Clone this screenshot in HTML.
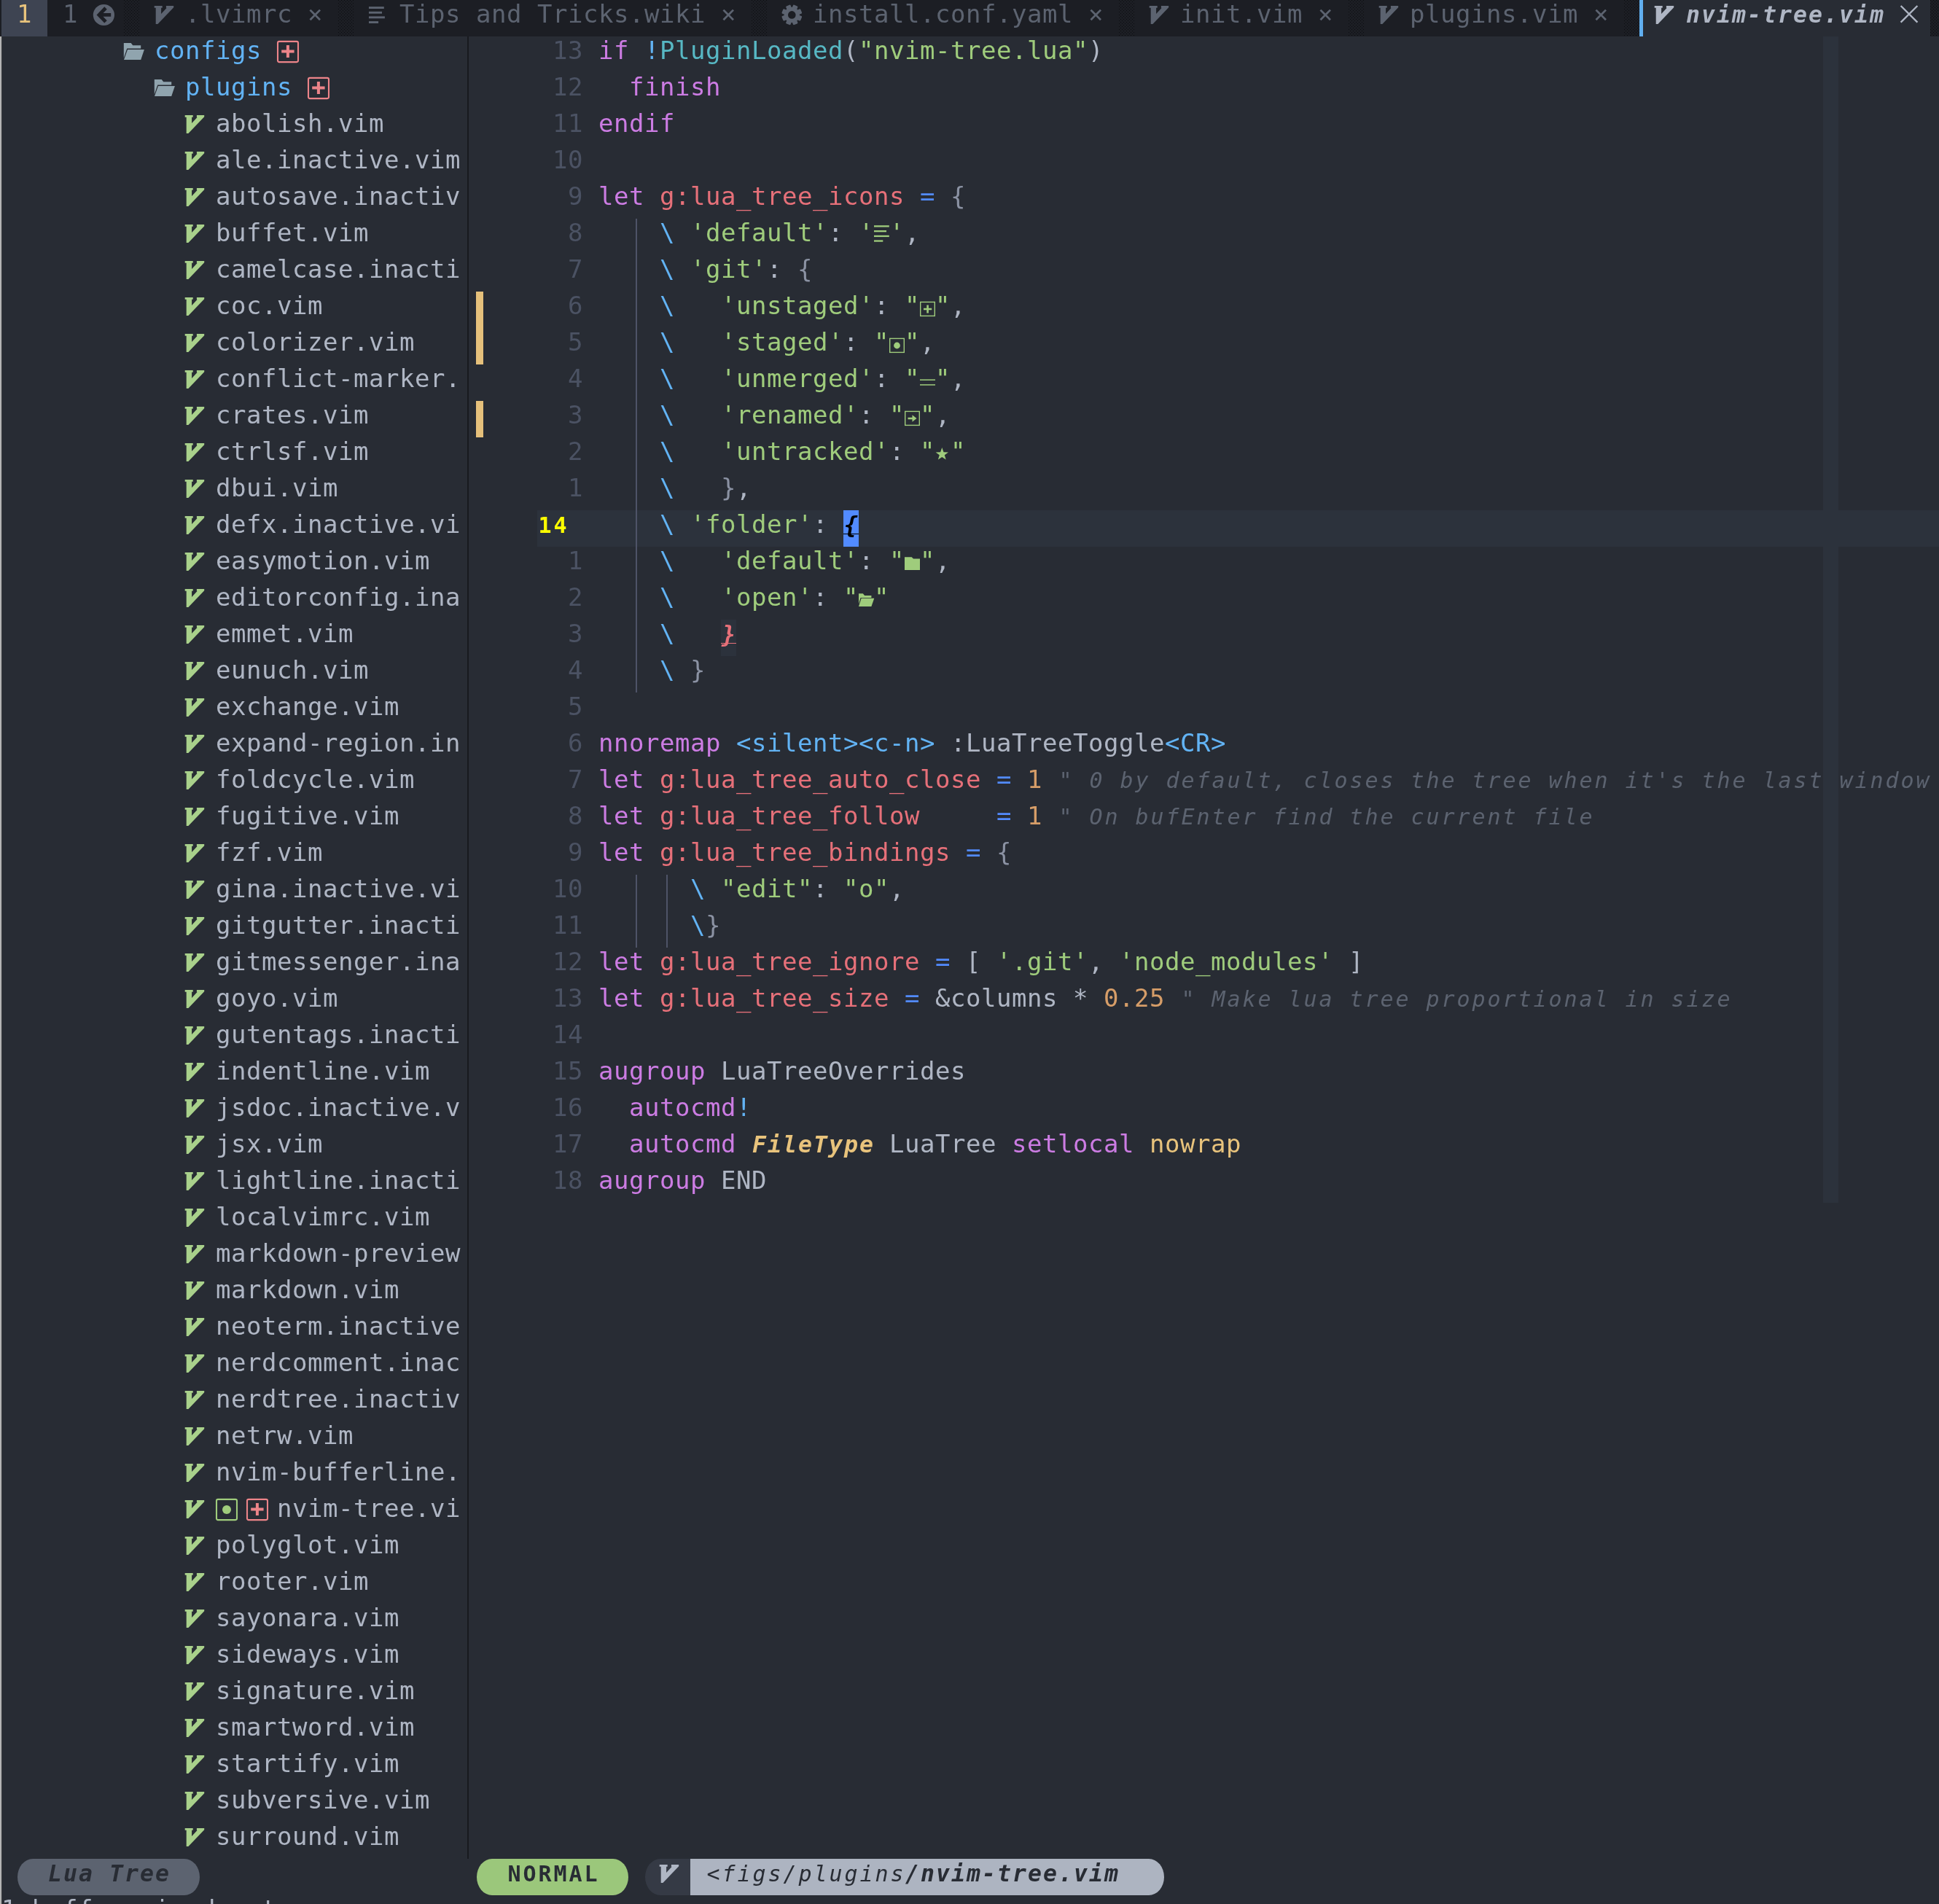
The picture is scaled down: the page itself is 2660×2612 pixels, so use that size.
<!DOCTYPE html><html lang="en"><head><meta charset="utf-8"><title>nvim-tree.vim - NVIM</title><style>

html,body{margin:0;padding:0}
body{background:#282c34;width:2660px;height:2612px;overflow:hidden;position:relative;
 font-family:"DejaVu Sans Mono","Liberation Mono",monospace;font-size:34.0px;color:#abb2bf}
.r{position:absolute;left:0;width:2660px;height:50px;overflow:visible;will-change:transform}
.r span{position:absolute;top:-5.6px;height:50px;line-height:50px;white-space:pre;letter-spacing:0.5303px;font-kerning:none;font-variant-ligatures:none}
.r svg{position:absolute;top:0;overflow:visible}
.bg{position:absolute;top:0;height:50px;display:block}
.abs{position:absolute;display:block}
.r span.b,.r span.cln{font-weight:bold;font-size:30.0px;letter-spacing:2.9385px;margin-left:1.47px;top:-4.22px}
.r span.it{font-style:italic;font-size:30.0px;letter-spacing:2.9385px;margin-left:1.47px;top:-4.22px}
.r span.bi{font-weight:bold;font-style:italic;font-size:31.5px;letter-spacing:2.0354px;margin-left:1.02px;top:-4.73px}
.cln{color:#ffff00}
.curt{color:#000}
.fg{color:#afb6c4}.br{color:#8b92a3}.pu{color:#cc7ce3}.bl{color:#62b3f4}.ob{color:#528bff}.cy{color:#57b8c4}.gr{color:#9fcc7c}.rd{color:#e67079}.or{color:#d69d68}.ye{color:#e8c37c}.cm{color:#5c6370}.ln{color:#4b5263}.tb{color:#5c6370}.dk{color:#282c34}.gi{color:#ec8489}
</style></head><body>
<svg width="0" height="0" style="position:absolute"><defs><pattern id="shp" width="4" height="4" patternUnits="userSpaceOnUse"><rect width="1" height="1" fill="#0c0d10"/><rect x="2" y="2" width="1" height="1" fill="#0c0d10"/></pattern></defs></svg>
<i class="abs" style="left:2501px;top:50px;width:21px;height:1600px;background:#2c323c"></i>
<i class="abs" style="left:737px;top:700px;width:1923px;height:50px;background:#2c323c"></i>
<i class="abs" style="left:653px;top:400px;width:10px;height:100px;background:#e5c07b"></i>
<i class="abs" style="left:653px;top:550px;width:10px;height:50px;background:#e5c07b"></i>
<i class="abs" style="left:872.0px;top:300px;width:2px;height:650px;background:#4e5367"></i>
<i class="abs" style="left:872.0px;top:1200px;width:2px;height:100px;background:#4e5367"></i>
<i class="abs" style="left:914.0px;top:1200px;width:2px;height:100px;background:#4e5367"></i>
<i class="abs" style="left:641px;top:50px;width:2px;height:2500px;background:#181a1f"></i>
<i class="abs" style="left:0;top:0;width:1.5px;height:2612px;background:#b4b4b4"></i>
<i class="abs" style="left:1.5px;top:0;width:0.7px;height:2612px;background:#3a3c40"></i>
<div class="r" style="top:0px"><i class="bg" style="left:0;width:2660px;background:#1c1e24"></i><i class="bg" style="left:2px;width:63px;background:#3e4452"></i><span class="ye" style="left:23px">1</span><span class="tb" style="left:86px">1</span><svg style="left:126px" width="32" height="50" viewBox="-2 0 32 50"><circle cx="14.4" cy="20.5" r="14.6" fill="#5c6370"/><path fill="none" stroke="#1c1e24" stroke-width="4.8" stroke-linecap="butt" d="M17,11L7.9,20.4L17,29.8M8.5,20.4H24.2"/></svg><svg style="left:170px" width="21" height="50"><rect width="21" height="50" fill="url(#shp)"/></svg><svg style="left:210px" width="32" height="50" viewBox="-2 0 32 50"><path fill="#5c6370" d="M-0.3,8.1H10.7V10.8H9.1V18.9L16.5,11L15.9,10.8V8.1H26.2V10.2L4.4,33.1H1.7V10.8H-0.3Z"/></svg><span class="tb" style="left:254px">.lvimrc</span><span class="tb" style="left:422px">×</span><svg style="left:464px" width="21" height="50"><rect width="21" height="50" fill="url(#shp)"/></svg><svg style="left:504px" width="32" height="50" viewBox="-2 0 32 50"><rect x="0" y="9.1" width="20.8" height="2.9" fill="#5c6370"/><rect x="0" y="15.8" width="18.0" height="2.9" fill="#5c6370"/><rect x="0" y="22.4" width="21.9" height="2.9" fill="#5c6370"/><rect x="0" y="29.1" width="13.1" height="2.9" fill="#5c6370"/></svg><span class="tb" style="left:548px">Tips and Tricks.wiki</span><span class="tb" style="left:989px">×</span><svg style="left:1031px" width="21" height="50"><rect width="21" height="50" fill="url(#shp)"/></svg><svg style="left:1071px" width="32" height="50" viewBox="-2 0 32 50"><rect x="9.9" y="6.5" width="6.8" height="8" rx="1.2" fill="#5c6370" transform="rotate(22.5 13.3 20.4)"/><rect x="9.9" y="6.5" width="6.8" height="8" rx="1.2" fill="#5c6370" transform="rotate(67.5 13.3 20.4)"/><rect x="9.9" y="6.5" width="6.8" height="8" rx="1.2" fill="#5c6370" transform="rotate(112.5 13.3 20.4)"/><rect x="9.9" y="6.5" width="6.8" height="8" rx="1.2" fill="#5c6370" transform="rotate(157.5 13.3 20.4)"/><rect x="9.9" y="6.5" width="6.8" height="8" rx="1.2" fill="#5c6370" transform="rotate(202.5 13.3 20.4)"/><rect x="9.9" y="6.5" width="6.8" height="8" rx="1.2" fill="#5c6370" transform="rotate(247.5 13.3 20.4)"/><rect x="9.9" y="6.5" width="6.8" height="8" rx="1.2" fill="#5c6370" transform="rotate(292.5 13.3 20.4)"/><rect x="9.9" y="6.5" width="6.8" height="8" rx="1.2" fill="#5c6370" transform="rotate(337.5 13.3 20.4)"/><circle cx="13.3" cy="20.4" r="10.6" fill="#5c6370"/><circle cx="13.3" cy="20.4" r="5.3" fill="#1c1e24"/></svg><span class="tb" style="left:1115px">install.conf.yaml</span><span class="tb" style="left:1493px">×</span><svg style="left:1535px" width="21" height="50"><rect width="21" height="50" fill="url(#shp)"/></svg><svg style="left:1575px" width="32" height="50" viewBox="-2 0 32 50"><path fill="#5c6370" d="M-0.3,8.1H10.7V10.8H9.1V18.9L16.5,11L15.9,10.8V8.1H26.2V10.2L4.4,33.1H1.7V10.8H-0.3Z"/></svg><span class="tb" style="left:1619px">init.vim</span><span class="tb" style="left:1808px">×</span><svg style="left:1850px" width="21" height="50"><rect width="21" height="50" fill="url(#shp)"/></svg><svg style="left:1890px" width="32" height="50" viewBox="-2 0 32 50"><path fill="#5c6370" d="M-0.3,8.1H10.7V10.8H9.1V18.9L16.5,11L15.9,10.8V8.1H26.2V10.2L4.4,33.1H1.7V10.8H-0.3Z"/></svg><span class="tb" style="left:1934px">plugins.vim</span><span class="tb" style="left:2186px">×</span><svg style="left:2228px" width="21" height="50"><rect width="21" height="50" fill="url(#shp)"/></svg><i class="bg" style="left:2249px;width:399px;background:#282c34"></i><i class="bg" style="left:2249px;width:5px;background:#61afef"></i><svg style="left:2268px" width="32" height="50" viewBox="-2 0 32 50"><path fill="#afb6c4" d="M-0.3,8.1H10.7V10.8H9.1V18.9L16.5,11L15.9,10.8V8.1H26.2V10.2L4.4,33.1H1.7V10.8H-0.3Z"/></svg><span class="fg bi" style="left:2312px">nvim-tree.vim</span><svg style="left:2604px" width="32" height="50" viewBox="-2 0 32 50"><path stroke="#afb6c4" stroke-width="2.4" fill="none" d="M1.6,8L24.4,30.6M24.4,8L1.6,30.6"/></svg><svg style="left:2648px" width="12" height="50"><rect width="12" height="50" fill="url(#shp)"/></svg></div>
<div class="r" style="top:50px"><svg style="left:168px" width="32" height="50" viewBox="-2 0 32 50"><path fill="#90a4ae" d="M-0.2,9H9.7L12.2,12.3H23.2V16.6H4.2L-0.2,29.5Z"/><path fill="#90a4ae" d="M5,18H27.9L23.2,32.1H0Z"/></svg><span class="bl" style="left:212px">configs</span><svg style="left:378px" width="32" height="50" viewBox="-2 0 32 50"><rect x="1" y="6.9" width="28" height="28.2" rx="2" fill="none" stroke="#ec8489" stroke-width="2.1"/><path fill="#ec8489" d="M12.9,12.1H16.9V18.6H23.6V22.6H16.9V29.1H12.9V22.6H6.2V18.6H12.9Z"/></svg><span class="ln" style="left:758px">13</span><span class="pu" style="left:821px">if</span><span class="bl" style="left:884px">!</span><span class="cy" style="left:905px">PluginLoaded</span><span class="fg" style="left:1157px">(</span><span class="gr" style="left:1178px">"nvim-tree.lua"</span><span class="fg" style="left:1493px">)</span></div>
<div class="r" style="top:100px"><svg style="left:210px" width="32" height="50" viewBox="-2 0 32 50"><path fill="#90a4ae" d="M-0.2,9H9.7L12.2,12.3H23.2V16.6H4.2L-0.2,29.5Z"/><path fill="#90a4ae" d="M5,18H27.9L23.2,32.1H0Z"/></svg><span class="bl" style="left:254px">plugins</span><svg style="left:420px" width="32" height="50" viewBox="-2 0 32 50"><rect x="1" y="6.9" width="28" height="28.2" rx="2" fill="none" stroke="#ec8489" stroke-width="2.1"/><path fill="#ec8489" d="M12.9,12.1H16.9V18.6H23.6V22.6H16.9V29.1H12.9V22.6H6.2V18.6H12.9Z"/></svg><span class="ln" style="left:758px">12</span><span class="pu" style="left:863px">finish</span></div>
<div class="r" style="top:150px"><svg style="left:252px" width="32" height="50" viewBox="-2 0 32 50"><path fill="#a9d18b" d="M-0.3,8.1H10.7V10.8H9.1V18.9L16.5,11L15.9,10.8V8.1H26.2V10.2L4.4,33.1H1.7V10.8H-0.3Z"/></svg><span class="fg" style="left:296px">abolish.vim</span><span class="ln" style="left:758px">11</span><span class="pu" style="left:821px">endif</span></div>
<div class="r" style="top:200px"><svg style="left:252px" width="32" height="50" viewBox="-2 0 32 50"><path fill="#a9d18b" d="M-0.3,8.1H10.7V10.8H9.1V18.9L16.5,11L15.9,10.8V8.1H26.2V10.2L4.4,33.1H1.7V10.8H-0.3Z"/></svg><span class="fg" style="left:296px">ale.inactive.vim</span><span class="ln" style="left:758px">10</span></div>
<div class="r" style="top:250px"><svg style="left:252px" width="32" height="50" viewBox="-2 0 32 50"><path fill="#a9d18b" d="M-0.3,8.1H10.7V10.8H9.1V18.9L16.5,11L15.9,10.8V8.1H26.2V10.2L4.4,33.1H1.7V10.8H-0.3Z"/></svg><span class="fg" style="left:296px">autosave.inactiv</span><span class="ln" style="left:779px">9</span><span class="pu" style="left:821px">let</span><span class="rd" style="left:905px">g:lua_tree_icons</span><span class="ob" style="left:1262px">=</span><span class="br" style="left:1304px">{</span></div>
<div class="r" style="top:300px"><svg style="left:252px" width="32" height="50" viewBox="-2 0 32 50"><path fill="#a9d18b" d="M-0.3,8.1H10.7V10.8H9.1V18.9L16.5,11L15.9,10.8V8.1H26.2V10.2L4.4,33.1H1.7V10.8H-0.3Z"/></svg><span class="fg" style="left:296px">buffet.vim</span><span class="ln" style="left:779px">8</span><span class="bl" style="left:905px">\</span><span class="gr" style="left:947px">'default'</span><span class="fg" style="left:1136px">:</span><span class="gr" style="left:1178px">'</span><svg style="left:1197px" width="32" height="50" viewBox="-2 0 32 50"><rect x="0" y="9.2" width="20.8" height="2.3" fill="#9fcc7c"/><rect x="0" y="16.0" width="17.0" height="2.3" fill="#9fcc7c"/><rect x="0" y="22.8" width="20.8" height="2.3" fill="#9fcc7c"/><rect x="0" y="29.4" width="12.3" height="2.3" fill="#9fcc7c"/></svg><span class="gr" style="left:1220px">'</span><span class="fg" style="left:1241px">,</span></div>
<div class="r" style="top:350px"><svg style="left:252px" width="32" height="50" viewBox="-2 0 32 50"><path fill="#a9d18b" d="M-0.3,8.1H10.7V10.8H9.1V18.9L16.5,11L15.9,10.8V8.1H26.2V10.2L4.4,33.1H1.7V10.8H-0.3Z"/></svg><span class="fg" style="left:296px">camelcase.inacti</span><span class="ln" style="left:779px">7</span><span class="bl" style="left:905px">\</span><span class="gr" style="left:947px">'git'</span><span class="fg" style="left:1052px">:</span><span class="br" style="left:1094px">{</span></div>
<div class="r" style="top:400px"><svg style="left:252px" width="32" height="50" viewBox="-2 0 32 50"><path fill="#a9d18b" d="M-0.3,8.1H10.7V10.8H9.1V18.9L16.5,11L15.9,10.8V8.1H26.2V10.2L4.4,33.1H1.7V10.8H-0.3Z"/></svg><span class="fg" style="left:296px">coc.vim</span><span class="ln" style="left:779px">6</span><span class="bl" style="left:905px">\</span><span class="gr" style="left:989px">'unstaged'</span><span class="fg" style="left:1199px">:</span><span class="gr" style="left:1241px">"</span><svg style="left:1260px" width="32" height="50" viewBox="-2 0 32 50"><rect x="0.7" y="14.4" width="19.6" height="19" fill="none" stroke="#9fcc7c" stroke-width="1.4"/><path fill="#9fcc7c" d="M9.3,18.4H11.9V22.7H16.2V25.3H11.9V29.6H9.3V25.3H5V22.7H9.3Z"/></svg><span class="gr" style="left:1283px">"</span><span class="fg" style="left:1304px">,</span></div>
<div class="r" style="top:450px"><svg style="left:252px" width="32" height="50" viewBox="-2 0 32 50"><path fill="#a9d18b" d="M-0.3,8.1H10.7V10.8H9.1V18.9L16.5,11L15.9,10.8V8.1H26.2V10.2L4.4,33.1H1.7V10.8H-0.3Z"/></svg><span class="fg" style="left:296px">colorizer.vim</span><span class="ln" style="left:779px">5</span><span class="bl" style="left:905px">\</span><span class="gr" style="left:989px">'staged'</span><span class="fg" style="left:1157px">:</span><span class="gr" style="left:1199px">"</span><svg style="left:1218px" width="32" height="50" viewBox="-2 0 32 50"><rect x="0.7" y="14.4" width="19.6" height="19" fill="none" stroke="#9fcc7c" stroke-width="1.4"/><circle cx="10.5" cy="24" r="4.4" fill="#9fcc7c"/></svg><span class="gr" style="left:1241px">"</span><span class="fg" style="left:1262px">,</span></div>
<div class="r" style="top:500px"><svg style="left:252px" width="32" height="50" viewBox="-2 0 32 50"><path fill="#a9d18b" d="M-0.3,8.1H10.7V10.8H9.1V18.9L16.5,11L15.9,10.8V8.1H26.2V10.2L4.4,33.1H1.7V10.8H-0.3Z"/></svg><span class="fg" style="left:296px">conflict-marker.</span><span class="ln" style="left:779px">4</span><span class="bl" style="left:905px">\</span><span class="gr" style="left:989px">'unmerged'</span><span class="fg" style="left:1199px">:</span><span class="gr" style="left:1241px">"</span><svg style="left:1260px" width="32" height="50" viewBox="-2 0 32 50"><rect x="0" y="20.4" width="21" height="1.5" fill="#9fcc7c"/><rect x="0" y="27.2" width="21" height="1.5" fill="#9fcc7c"/></svg><span class="gr" style="left:1283px">"</span><span class="fg" style="left:1304px">,</span></div>
<div class="r" style="top:550px"><svg style="left:252px" width="32" height="50" viewBox="-2 0 32 50"><path fill="#a9d18b" d="M-0.3,8.1H10.7V10.8H9.1V18.9L16.5,11L15.9,10.8V8.1H26.2V10.2L4.4,33.1H1.7V10.8H-0.3Z"/></svg><span class="fg" style="left:296px">crates.vim</span><span class="ln" style="left:779px">3</span><span class="bl" style="left:905px">\</span><span class="gr" style="left:989px">'renamed'</span><span class="fg" style="left:1178px">:</span><span class="gr" style="left:1220px">"</span><svg style="left:1239px" width="32" height="50" viewBox="-2 0 32 50"><rect x="0.7" y="14.4" width="19.6" height="19" fill="none" stroke="#9fcc7c" stroke-width="1.4"/><path fill="#9fcc7c" d="M4.5,22.8H10.5V19.2L16.5,24L10.5,28.8V25.2H4.5Z"/></svg><span class="gr" style="left:1262px">"</span><span class="fg" style="left:1283px">,</span></div>
<div class="r" style="top:600px"><svg style="left:252px" width="32" height="50" viewBox="-2 0 32 50"><path fill="#a9d18b" d="M-0.3,8.1H10.7V10.8H9.1V18.9L16.5,11L15.9,10.8V8.1H26.2V10.2L4.4,33.1H1.7V10.8H-0.3Z"/></svg><span class="fg" style="left:296px">ctrlsf.vim</span><span class="ln" style="left:779px">2</span><span class="bl" style="left:905px">\</span><span class="gr" style="left:989px">'untracked'</span><span class="fg" style="left:1220px">:</span><span class="gr" style="left:1262px">"</span><svg style="left:1281px" width="32" height="50" viewBox="-2 0 32 50"><polygon fill="#9fcc7c" points="9.3,14.0 11.5,20.2 18.0,20.4 12.8,24.3 14.7,30.6 9.3,26.9 3.9,30.6 5.8,24.3 0.6,20.4 7.1,20.2"/></svg><span class="gr" style="left:1304px">"</span></div>
<div class="r" style="top:650px"><svg style="left:252px" width="32" height="50" viewBox="-2 0 32 50"><path fill="#a9d18b" d="M-0.3,8.1H10.7V10.8H9.1V18.9L16.5,11L15.9,10.8V8.1H26.2V10.2L4.4,33.1H1.7V10.8H-0.3Z"/></svg><span class="fg" style="left:296px">dbui.vim</span><span class="ln" style="left:779px">1</span><span class="bl" style="left:905px">\</span><span class="br" style="left:989px">}</span><span class="fg" style="left:1010px">,</span></div>
<div class="r" style="top:700px"><svg style="left:252px" width="32" height="50" viewBox="-2 0 32 50"><path fill="#a9d18b" d="M-0.3,8.1H10.7V10.8H9.1V18.9L16.5,11L15.9,10.8V8.1H26.2V10.2L4.4,33.1H1.7V10.8H-0.3Z"/></svg><span class="fg" style="left:296px">defx.inactive.vi</span><span class="cln" style="left:737px">14</span><span class="bl" style="left:905px">\</span><span class="gr" style="left:947px">'folder'</span><span class="fg" style="left:1115px">:</span><i class="bg" style="left:1157px;width:21px;background:#528bff"></i><span class="curt bi" style="left:1157px">{</span><i class="abs" style="left:1157px;top:32px;width:21px;height:1.3px;background:#000"></i></div>
<div class="r" style="top:750px"><svg style="left:252px" width="32" height="50" viewBox="-2 0 32 50"><path fill="#a9d18b" d="M-0.3,8.1H10.7V10.8H9.1V18.9L16.5,11L15.9,10.8V8.1H26.2V10.2L4.4,33.1H1.7V10.8H-0.3Z"/></svg><span class="fg" style="left:296px">easymotion.vim</span><span class="ln" style="left:779px">1</span><span class="bl" style="left:905px">\</span><span class="gr" style="left:989px">'default'</span><span class="fg" style="left:1178px">:</span><span class="gr" style="left:1220px">"</span><svg style="left:1239px" width="32" height="50" viewBox="-2 0 32 50"><path fill="#9fcc7c" d="M0,14.3H9.7L12,16.6H21V31.9H0Z"/></svg><span class="gr" style="left:1262px">"</span><span class="fg" style="left:1283px">,</span></div>
<div class="r" style="top:800px"><svg style="left:252px" width="32" height="50" viewBox="-2 0 32 50"><path fill="#a9d18b" d="M-0.3,8.1H10.7V10.8H9.1V18.9L16.5,11L15.9,10.8V8.1H26.2V10.2L4.4,33.1H1.7V10.8H-0.3Z"/></svg><span class="fg" style="left:296px">editorconfig.ina</span><span class="ln" style="left:779px">2</span><span class="bl" style="left:905px">\</span><span class="gr" style="left:989px">'open'</span><span class="fg" style="left:1115px">:</span><span class="gr" style="left:1157px">"</span><svg style="left:1176px" width="32" height="50" viewBox="-2 0 32 50"><path fill="#9fcc7c" d="M0,14.2H5.8L8.1,16.9H17.4V20H2.6L0,28.5Z"/><path fill="#9fcc7c" d="M3.6,20.8H21.3L17.4,32H0Z"/></svg><span class="gr" style="left:1199px">"</span></div>
<div class="r" style="top:850px"><svg style="left:252px" width="32" height="50" viewBox="-2 0 32 50"><path fill="#a9d18b" d="M-0.3,8.1H10.7V10.8H9.1V18.9L16.5,11L15.9,10.8V8.1H26.2V10.2L4.4,33.1H1.7V10.8H-0.3Z"/></svg><span class="fg" style="left:296px">emmet.vim</span><span class="ln" style="left:779px">3</span><span class="bl" style="left:905px">\</span><i class="bg" style="left:989px;width:21px;background:#2c323c"></i><span class="rd bi" style="left:989px">}</span><i class="abs" style="left:989px;top:32px;width:21px;height:1.3px;background:#e67079"></i></div>
<div class="r" style="top:900px"><svg style="left:252px" width="32" height="50" viewBox="-2 0 32 50"><path fill="#a9d18b" d="M-0.3,8.1H10.7V10.8H9.1V18.9L16.5,11L15.9,10.8V8.1H26.2V10.2L4.4,33.1H1.7V10.8H-0.3Z"/></svg><span class="fg" style="left:296px">eunuch.vim</span><span class="ln" style="left:779px">4</span><span class="bl" style="left:905px">\</span><span class="br" style="left:947px">}</span></div>
<div class="r" style="top:950px"><svg style="left:252px" width="32" height="50" viewBox="-2 0 32 50"><path fill="#a9d18b" d="M-0.3,8.1H10.7V10.8H9.1V18.9L16.5,11L15.9,10.8V8.1H26.2V10.2L4.4,33.1H1.7V10.8H-0.3Z"/></svg><span class="fg" style="left:296px">exchange.vim</span><span class="ln" style="left:779px">5</span></div>
<div class="r" style="top:1000px"><svg style="left:252px" width="32" height="50" viewBox="-2 0 32 50"><path fill="#a9d18b" d="M-0.3,8.1H10.7V10.8H9.1V18.9L16.5,11L15.9,10.8V8.1H26.2V10.2L4.4,33.1H1.7V10.8H-0.3Z"/></svg><span class="fg" style="left:296px">expand-region.in</span><span class="ln" style="left:779px">6</span><span class="pu" style="left:821px">nnoremap</span><span class="bl" style="left:1010px">&lt;silent&gt;&lt;c-n&gt;</span><span class="fg" style="left:1304px">:LuaTreeToggle</span><span class="bl" style="left:1598px">&lt;CR&gt;</span></div>
<div class="r" style="top:1050px"><svg style="left:252px" width="32" height="50" viewBox="-2 0 32 50"><path fill="#a9d18b" d="M-0.3,8.1H10.7V10.8H9.1V18.9L16.5,11L15.9,10.8V8.1H26.2V10.2L4.4,33.1H1.7V10.8H-0.3Z"/></svg><span class="fg" style="left:296px">foldcycle.vim</span><span class="ln" style="left:779px">7</span><span class="pu" style="left:821px">let</span><span class="rd" style="left:905px">g:lua_tree_auto_close</span><span class="ob" style="left:1367px">=</span><span class="or" style="left:1409px">1</span><span class="cm it" style="left:1451px">" 0 by default, closes the tree when it's the last window</span></div>
<div class="r" style="top:1100px"><svg style="left:252px" width="32" height="50" viewBox="-2 0 32 50"><path fill="#a9d18b" d="M-0.3,8.1H10.7V10.8H9.1V18.9L16.5,11L15.9,10.8V8.1H26.2V10.2L4.4,33.1H1.7V10.8H-0.3Z"/></svg><span class="fg" style="left:296px">fugitive.vim</span><span class="ln" style="left:779px">8</span><span class="pu" style="left:821px">let</span><span class="rd" style="left:905px">g:lua_tree_follow</span><span class="ob" style="left:1367px">=</span><span class="or" style="left:1409px">1</span><span class="cm it" style="left:1451px">" On bufEnter find the current file</span></div>
<div class="r" style="top:1150px"><svg style="left:252px" width="32" height="50" viewBox="-2 0 32 50"><path fill="#a9d18b" d="M-0.3,8.1H10.7V10.8H9.1V18.9L16.5,11L15.9,10.8V8.1H26.2V10.2L4.4,33.1H1.7V10.8H-0.3Z"/></svg><span class="fg" style="left:296px">fzf.vim</span><span class="ln" style="left:779px">9</span><span class="pu" style="left:821px">let</span><span class="rd" style="left:905px">g:lua_tree_bindings</span><span class="ob" style="left:1325px">=</span><span class="br" style="left:1367px">{</span></div>
<div class="r" style="top:1200px"><svg style="left:252px" width="32" height="50" viewBox="-2 0 32 50"><path fill="#a9d18b" d="M-0.3,8.1H10.7V10.8H9.1V18.9L16.5,11L15.9,10.8V8.1H26.2V10.2L4.4,33.1H1.7V10.8H-0.3Z"/></svg><span class="fg" style="left:296px">gina.inactive.vi</span><span class="ln" style="left:758px">10</span><span class="bl" style="left:947px">\</span><span class="gr" style="left:989px">"edit"</span><span class="fg" style="left:1115px">:</span><span class="gr" style="left:1157px">"o"</span><span class="fg" style="left:1220px">,</span></div>
<div class="r" style="top:1250px"><svg style="left:252px" width="32" height="50" viewBox="-2 0 32 50"><path fill="#a9d18b" d="M-0.3,8.1H10.7V10.8H9.1V18.9L16.5,11L15.9,10.8V8.1H26.2V10.2L4.4,33.1H1.7V10.8H-0.3Z"/></svg><span class="fg" style="left:296px">gitgutter.inacti</span><span class="ln" style="left:758px">11</span><span class="bl" style="left:947px">\</span><span class="br" style="left:968px">}</span></div>
<div class="r" style="top:1300px"><svg style="left:252px" width="32" height="50" viewBox="-2 0 32 50"><path fill="#a9d18b" d="M-0.3,8.1H10.7V10.8H9.1V18.9L16.5,11L15.9,10.8V8.1H26.2V10.2L4.4,33.1H1.7V10.8H-0.3Z"/></svg><span class="fg" style="left:296px">gitmessenger.ina</span><span class="ln" style="left:758px">12</span><span class="pu" style="left:821px">let</span><span class="rd" style="left:905px">g:lua_tree_ignore</span><span class="ob" style="left:1283px">=</span><span class="fg" style="left:1325px">[</span><span class="gr" style="left:1367px">'.git'</span><span class="fg" style="left:1493px">,</span><span class="gr" style="left:1535px">'node_modules'</span><span class="fg" style="left:1850px">]</span></div>
<div class="r" style="top:1350px"><svg style="left:252px" width="32" height="50" viewBox="-2 0 32 50"><path fill="#a9d18b" d="M-0.3,8.1H10.7V10.8H9.1V18.9L16.5,11L15.9,10.8V8.1H26.2V10.2L4.4,33.1H1.7V10.8H-0.3Z"/></svg><span class="fg" style="left:296px">goyo.vim</span><span class="ln" style="left:758px">13</span><span class="pu" style="left:821px">let</span><span class="rd" style="left:905px">g:lua_tree_size</span><span class="ob" style="left:1241px">=</span><span class="fg" style="left:1283px">&amp;columns</span><span class="fg" style="left:1472px">*</span><span class="or" style="left:1514px">0.25</span><span class="cm it" style="left:1619px">" Make lua tree proportional in size</span></div>
<div class="r" style="top:1400px"><svg style="left:252px" width="32" height="50" viewBox="-2 0 32 50"><path fill="#a9d18b" d="M-0.3,8.1H10.7V10.8H9.1V18.9L16.5,11L15.9,10.8V8.1H26.2V10.2L4.4,33.1H1.7V10.8H-0.3Z"/></svg><span class="fg" style="left:296px">gutentags.inacti</span><span class="ln" style="left:758px">14</span></div>
<div class="r" style="top:1450px"><svg style="left:252px" width="32" height="50" viewBox="-2 0 32 50"><path fill="#a9d18b" d="M-0.3,8.1H10.7V10.8H9.1V18.9L16.5,11L15.9,10.8V8.1H26.2V10.2L4.4,33.1H1.7V10.8H-0.3Z"/></svg><span class="fg" style="left:296px">indentline.vim</span><span class="ln" style="left:758px">15</span><span class="pu" style="left:821px">augroup</span><span class="fg" style="left:989px">LuaTreeOverrides</span></div>
<div class="r" style="top:1500px"><svg style="left:252px" width="32" height="50" viewBox="-2 0 32 50"><path fill="#a9d18b" d="M-0.3,8.1H10.7V10.8H9.1V18.9L16.5,11L15.9,10.8V8.1H26.2V10.2L4.4,33.1H1.7V10.8H-0.3Z"/></svg><span class="fg" style="left:296px">jsdoc.inactive.v</span><span class="ln" style="left:758px">16</span><span class="pu" style="left:863px">autocmd</span><span class="bl" style="left:1010px">!</span></div>
<div class="r" style="top:1550px"><svg style="left:252px" width="32" height="50" viewBox="-2 0 32 50"><path fill="#a9d18b" d="M-0.3,8.1H10.7V10.8H9.1V18.9L16.5,11L15.9,10.8V8.1H26.2V10.2L4.4,33.1H1.7V10.8H-0.3Z"/></svg><span class="fg" style="left:296px">jsx.vim</span><span class="ln" style="left:758px">17</span><span class="pu" style="left:863px">autocmd</span><span class="ye bi" style="left:1031px">FileType</span><span class="fg" style="left:1220px">LuaTree</span><span class="pu" style="left:1388px">setlocal</span><span class="ye" style="left:1577px">nowrap</span></div>
<div class="r" style="top:1600px"><svg style="left:252px" width="32" height="50" viewBox="-2 0 32 50"><path fill="#a9d18b" d="M-0.3,8.1H10.7V10.8H9.1V18.9L16.5,11L15.9,10.8V8.1H26.2V10.2L4.4,33.1H1.7V10.8H-0.3Z"/></svg><span class="fg" style="left:296px">lightline.inacti</span><span class="ln" style="left:758px">18</span><span class="pu" style="left:821px">augroup</span><span class="fg" style="left:989px">END</span></div>
<div class="r" style="top:1650px"><svg style="left:252px" width="32" height="50" viewBox="-2 0 32 50"><path fill="#a9d18b" d="M-0.3,8.1H10.7V10.8H9.1V18.9L16.5,11L15.9,10.8V8.1H26.2V10.2L4.4,33.1H1.7V10.8H-0.3Z"/></svg><span class="fg" style="left:296px">localvimrc.vim</span></div>
<div class="r" style="top:1700px"><svg style="left:252px" width="32" height="50" viewBox="-2 0 32 50"><path fill="#a9d18b" d="M-0.3,8.1H10.7V10.8H9.1V18.9L16.5,11L15.9,10.8V8.1H26.2V10.2L4.4,33.1H1.7V10.8H-0.3Z"/></svg><span class="fg" style="left:296px">markdown-preview</span></div>
<div class="r" style="top:1750px"><svg style="left:252px" width="32" height="50" viewBox="-2 0 32 50"><path fill="#a9d18b" d="M-0.3,8.1H10.7V10.8H9.1V18.9L16.5,11L15.9,10.8V8.1H26.2V10.2L4.4,33.1H1.7V10.8H-0.3Z"/></svg><span class="fg" style="left:296px">markdown.vim</span></div>
<div class="r" style="top:1800px"><svg style="left:252px" width="32" height="50" viewBox="-2 0 32 50"><path fill="#a9d18b" d="M-0.3,8.1H10.7V10.8H9.1V18.9L16.5,11L15.9,10.8V8.1H26.2V10.2L4.4,33.1H1.7V10.8H-0.3Z"/></svg><span class="fg" style="left:296px">neoterm.inactive</span></div>
<div class="r" style="top:1850px"><svg style="left:252px" width="32" height="50" viewBox="-2 0 32 50"><path fill="#a9d18b" d="M-0.3,8.1H10.7V10.8H9.1V18.9L16.5,11L15.9,10.8V8.1H26.2V10.2L4.4,33.1H1.7V10.8H-0.3Z"/></svg><span class="fg" style="left:296px">nerdcomment.inac</span></div>
<div class="r" style="top:1900px"><svg style="left:252px" width="32" height="50" viewBox="-2 0 32 50"><path fill="#a9d18b" d="M-0.3,8.1H10.7V10.8H9.1V18.9L16.5,11L15.9,10.8V8.1H26.2V10.2L4.4,33.1H1.7V10.8H-0.3Z"/></svg><span class="fg" style="left:296px">nerdtree.inactiv</span></div>
<div class="r" style="top:1950px"><svg style="left:252px" width="32" height="50" viewBox="-2 0 32 50"><path fill="#a9d18b" d="M-0.3,8.1H10.7V10.8H9.1V18.9L16.5,11L15.9,10.8V8.1H26.2V10.2L4.4,33.1H1.7V10.8H-0.3Z"/></svg><span class="fg" style="left:296px">netrw.vim</span></div>
<div class="r" style="top:2000px"><svg style="left:252px" width="32" height="50" viewBox="-2 0 32 50"><path fill="#a9d18b" d="M-0.3,8.1H10.7V10.8H9.1V18.9L16.5,11L15.9,10.8V8.1H26.2V10.2L4.4,33.1H1.7V10.8H-0.3Z"/></svg><span class="fg" style="left:296px">nvim-bufferline.</span></div>
<div class="r" style="top:2050px"><svg style="left:252px" width="32" height="50" viewBox="-2 0 32 50"><path fill="#a9d18b" d="M-0.3,8.1H10.7V10.8H9.1V18.9L16.5,11L15.9,10.8V8.1H26.2V10.2L4.4,33.1H1.7V10.8H-0.3Z"/></svg><svg style="left:294px" width="32" height="50" viewBox="-2 0 32 50"><rect x="1" y="6.9" width="28" height="28.2" rx="2" fill="none" stroke="#9fcc7c" stroke-width="2.1"/><circle cx="15" cy="21" r="6" fill="#9fcc7c"/></svg><svg style="left:336px" width="32" height="50" viewBox="-2 0 32 50"><rect x="1" y="6.9" width="28" height="28.2" rx="2" fill="none" stroke="#ec8489" stroke-width="2.1"/><path fill="#ec8489" d="M12.9,12.1H16.9V18.6H23.6V22.6H16.9V29.1H12.9V22.6H6.2V18.6H12.9Z"/></svg><span class="fg" style="left:380px">nvim-tree.vi</span></div>
<div class="r" style="top:2100px"><svg style="left:252px" width="32" height="50" viewBox="-2 0 32 50"><path fill="#a9d18b" d="M-0.3,8.1H10.7V10.8H9.1V18.9L16.5,11L15.9,10.8V8.1H26.2V10.2L4.4,33.1H1.7V10.8H-0.3Z"/></svg><span class="fg" style="left:296px">polyglot.vim</span></div>
<div class="r" style="top:2150px"><svg style="left:252px" width="32" height="50" viewBox="-2 0 32 50"><path fill="#a9d18b" d="M-0.3,8.1H10.7V10.8H9.1V18.9L16.5,11L15.9,10.8V8.1H26.2V10.2L4.4,33.1H1.7V10.8H-0.3Z"/></svg><span class="fg" style="left:296px">rooter.vim</span></div>
<div class="r" style="top:2200px"><svg style="left:252px" width="32" height="50" viewBox="-2 0 32 50"><path fill="#a9d18b" d="M-0.3,8.1H10.7V10.8H9.1V18.9L16.5,11L15.9,10.8V8.1H26.2V10.2L4.4,33.1H1.7V10.8H-0.3Z"/></svg><span class="fg" style="left:296px">sayonara.vim</span></div>
<div class="r" style="top:2250px"><svg style="left:252px" width="32" height="50" viewBox="-2 0 32 50"><path fill="#a9d18b" d="M-0.3,8.1H10.7V10.8H9.1V18.9L16.5,11L15.9,10.8V8.1H26.2V10.2L4.4,33.1H1.7V10.8H-0.3Z"/></svg><span class="fg" style="left:296px">sideways.vim</span></div>
<div class="r" style="top:2300px"><svg style="left:252px" width="32" height="50" viewBox="-2 0 32 50"><path fill="#a9d18b" d="M-0.3,8.1H10.7V10.8H9.1V18.9L16.5,11L15.9,10.8V8.1H26.2V10.2L4.4,33.1H1.7V10.8H-0.3Z"/></svg><span class="fg" style="left:296px">signature.vim</span></div>
<div class="r" style="top:2350px"><svg style="left:252px" width="32" height="50" viewBox="-2 0 32 50"><path fill="#a9d18b" d="M-0.3,8.1H10.7V10.8H9.1V18.9L16.5,11L15.9,10.8V8.1H26.2V10.2L4.4,33.1H1.7V10.8H-0.3Z"/></svg><span class="fg" style="left:296px">smartword.vim</span></div>
<div class="r" style="top:2400px"><svg style="left:252px" width="32" height="50" viewBox="-2 0 32 50"><path fill="#a9d18b" d="M-0.3,8.1H10.7V10.8H9.1V18.9L16.5,11L15.9,10.8V8.1H26.2V10.2L4.4,33.1H1.7V10.8H-0.3Z"/></svg><span class="fg" style="left:296px">startify.vim</span></div>
<div class="r" style="top:2450px"><svg style="left:252px" width="32" height="50" viewBox="-2 0 32 50"><path fill="#a9d18b" d="M-0.3,8.1H10.7V10.8H9.1V18.9L16.5,11L15.9,10.8V8.1H26.2V10.2L4.4,33.1H1.7V10.8H-0.3Z"/></svg><span class="fg" style="left:296px">subversive.vim</span></div>
<div class="r" style="top:2500px"><svg style="left:252px" width="32" height="50" viewBox="-2 0 32 50"><path fill="#a9d18b" d="M-0.3,8.1H10.7V10.8H9.1V18.9L16.5,11L15.9,10.8V8.1H26.2V10.2L4.4,33.1H1.7V10.8H-0.3Z"/></svg><span class="fg" style="left:296px">surround.vim</span></div>
<div class="r" style="top:2550px"><i class="bg" style="left:24px;width:250px;background:#5c6370;border-radius:21px/25px"></i><span class="dk bi" style="left:65px">Lua Tree</span><i class="bg" style="left:654px;width:208px;background:#9bc77b;border-radius:21px/25px"></i><span class="dk b" style="left:695px">NORMAL</span><i class="bg" style="left:885px;width:167px;background:#353a45;border-radius:21px 0 0 21px/25px 0 0 25px"></i><i class="bg" style="left:947px;width:650px;background:#adb4c1;border-radius:0 21px 21px 0/0 25px 25px 0"></i><svg style="left:903px" width="32" height="50" viewBox="-2 0 32 50"><path fill="#afb6c4" d="M-0.3,8.1H10.7V10.8H9.1V18.9L16.5,11L15.9,10.8V8.1H26.2V10.2L4.4,33.1H1.7V10.8H-0.3Z"/></svg><span class="dk it" style="left:968px">&lt;figs/plugins</span><span class="dk bi" style="left:1241px">/nvim-tree.vim</span></div>
<div class="r" style="top:2600px"><span class="fg" style="left:2px">1 buffer wiped out</span></div>
</body></html>
